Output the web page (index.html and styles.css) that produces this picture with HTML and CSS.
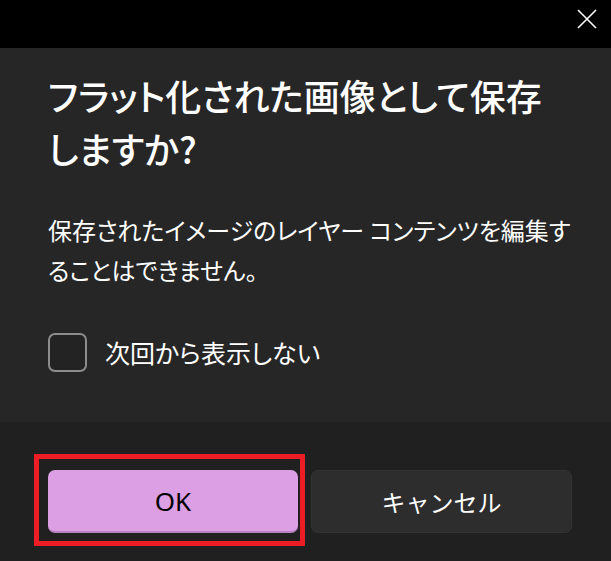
FILE: index.html
```html
<!DOCTYPE html>
<html lang="ja">
<head>
<meta charset="utf-8">
<link rel="stylesheet" href="styles.css">
</head>
<body>
<div class="dialog">
  <div class="titlebar">
    <button class="close" aria-label="閉じる">
      <svg width="20" height="20" viewBox="0 0 20 20"><path d="M1 1 L19 19 M19 1 L1 19" stroke="#ffffff" stroke-width="1.6" fill="none"/></svg>
    </button>
  </div>
  <div class="content">
    <h1 class="title">フラット化された画像として保存しますか?</h1>
    <p class="message">保存されたイメージのレイヤー コンテンツを編集することはできません。</p>
    <label class="check">
      <span class="box"></span>
      <span class="check-label">次回から表示しない</span>
    </label>
  </div>
  <div class="footer">
    <div class="ok-wrap">
      <button class="btn btn-primary">OK</button>
      <span class="highlight"></span>
    </div>
    <button class="btn btn-secondary">キャンセル</button>
  </div>
</div>
</body>
</html>
```

FILE: styles.css
```css
* { box-sizing: border-box; }
html, body { margin: 0; padding: 0; }
body {
  width: 611px;
  height: 561px;
  overflow: hidden;
  background: #202020;
  font-family: "Noto Sans CJK JP", "Noto Sans", sans-serif;
  color: #ffffff;
}
.dialog {
  display: flex;
  flex-direction: column;
  height: 561px;
}
.titlebar {
  height: 48px;
  background: #000000;
  display: flex;
  justify-content: flex-end;
  align-items: flex-start;
}
.close {
  width: 48px;
  height: 38px;
  border: 0;
  background: transparent;
  padding: 0;
  display: flex;
  align-items: center;
  justify-content: center;
}
.close svg { display: block; }
.content {
  height: 374px;
  background: #262626;
  padding: 21px 39px 0 48px;
  display: flex;
  flex-direction: column;
}
.title {
  margin: 0;
  max-width: 510px;
  font-size: 36px;
  line-height: 53px;
  font-weight: 500;
  font-feature-settings: "palt";
}
.message {
  margin: 35px 0 0;
  font-size: 24px;
  line-height: 40px;
  font-weight: 400;
  font-feature-settings: "palt";
}
.check {
  margin-top: 43px;
  display: flex;
  align-items: center;
  gap: 18px;
}
.box {
  width: 39px;
  height: 39px;
  border: 2px solid #8c8c8c;
  border-radius: 7px;
  background: #232323;
  flex: none;
}
.check-label {
  font-size: 25px;
  line-height: 39px;
  font-feature-settings: "palt";
}
.footer {
  flex: 1;
  background: #202020;
  padding: 48px 39px 0 48px;
  display: flex;
  gap: 13px;
  align-items: flex-start;
}
.ok-wrap {
  position: relative;
  width: 250px;
  height: 63px;
}
.btn {
  height: 63px;
  border-radius: 7px;
  font-size: 26px;
  font-weight: 400;
  font-family: "Noto Sans", "Noto Sans CJK JP", sans-serif;
  display: flex;
  align-items: center;
  justify-content: center;
  padding: 0;
}
.btn-primary {
  width: 250px;
  background: #dc9fe3;
  color: #000000;
  border: 0;
  border-bottom: 2px solid #b981c0;
}
.btn-secondary {
  width: 261px;
  background: #2d2d2d;
  color: #ffffff;
  border: 1px solid #333333;
  font-family: "Noto Sans CJK JP", sans-serif;
  font-size: 24px;
}
.highlight {
  position: absolute;
  left: -14px;
  top: -16px;
  right: -7px;
  bottom: -13px;
  border: 5px solid #ee1c25;
  pointer-events: none;
}
```
